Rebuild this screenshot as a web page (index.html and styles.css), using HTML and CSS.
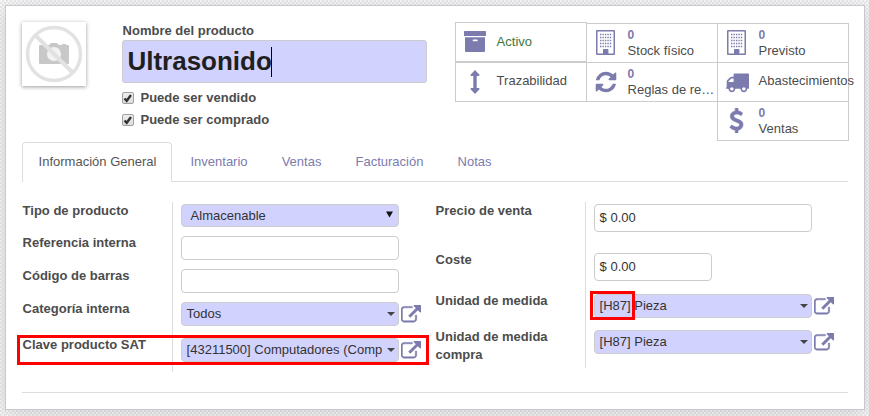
FILE: index.html
```html
<!DOCTYPE html>
<html lang="es">
<head>
<meta charset="utf-8">
<title>Ultrasonido</title>
<link rel="stylesheet" href="styles.css">
</head>
<body>
<svg width="0" height="0" class="defs">
  <symbol id="ext" viewBox="0 0 1792 1792"><path d="M1408 928v320q0 119-84.5 203.5t-203.5 84.5h-832q-119 0-203.5-84.5t-84.5-203.5v-832q0-119 84.5-203.5t203.5-84.5h704q14 0 23 9t9 23v64q0 14-9 23t-23 9h-704q-66 0-113 47t-47 113v832q0 66 47 113t113 47h832q66 0 113-47t47-113v-320q0-14 9-23t23-9h64q14 0 23 9t9 23zm384-864v512q0 26-19 45t-45 19-45-19l-176-176-652 652q-10 10-23 10t-23-10l-114-114q-10-10-10-23t10-23l652-652-176-176q-19-19-19-45t19-45 45-19h512q26 0 45 19t19 45z"/></symbol>
  <symbol id="building" viewBox="0 0 19 25"><path fill-rule="evenodd" d="M1 0h17a1 1 0 0 1 1 1v23a1 1 0 0 1-1 1H1a1 1 0 0 1-1-1V1a1 1 0 0 1 1-1zM1.500 1.500v22H7v-3.700q0-.7.700-.7h4q.700 0 .700.7v3.700h5.100v-22z"/><path d="M4 4.500h11.200M4 7.500h11.200M4 10.500h11.200M4 13.500h11.200M4 16.500h11.200" stroke="#7c7bad" stroke-width="1.300" stroke-dasharray="1.400 1.050"/></symbol>
</svg>
<main class="sheet">
  <header class="head">
    <div class="photo">
      <svg width="64" height="64" viewBox="0 0 64 64"><path fill="#c8c8c8" d="M18 23h9l2-2h6l2 2h3v-1h4v1h2q1 0 1 1v17q0 1-1 1H18q-1 0-1-1V24q0-1 1-1z"/><circle cx="32" cy="32" r="7" fill="#f2f2f2"/><path d="M14 14l36 36" stroke="#e2e2e2" stroke-width="4"/><circle cx="32" cy="32" r="26.500" fill="none" stroke="#e2e2e2" stroke-width="3.500"/></svg>
    </div>
    <div class="title">
      <label class="lbl">Nombre del producto</label>
      <div class="name"><span>Ultrasonido</span><i class="caret"></i></div>
      <label class="check"><i class="box"><svg width="12" height="12" viewBox="0 0 12 12"><path d="M2.500 6.500l2.200 2.300L9 3" fill="none" stroke="#333" stroke-width="2.400"/></svg></i>Puede ser vendido</label>
      <label class="check"><i class="box"><svg width="12" height="12" viewBox="0 0 12 12"><path d="M2.500 6.500l2.200 2.300L9 3" fill="none" stroke="#333" stroke-width="2.400"/></svg></i>Puede ser comprado</label>
    </div>
    <div class="stats">
      <div class="col first">
        <div class="stat"><span class="ico"><svg width="22" height="21" viewBox="0 0 22 21"><path fill-rule="evenodd" d="M.7 0h20.600q.7 0 .7.700V5H0V.700Q0 0 .7 0zM1 6.200h20V20q0 1-1 1H2q-1 0-1-1zM9.500 8.500q-.8 0-.8.900t.8.900h3.400q.8 0 .8-.9t-.8-.9z"/></svg></span><span class="one green">Activo</span></div>
        <div class="stat"><span class="ico"><svg width="10" height="24" viewBox="0 0 10 24"><path d="M5 0l4.500 4.700q.3 1.100-.7 1.300H6.700v12h2.100q1 .2.700 1.300L5 24 .5 19.300Q.2 18.200 1.200 18h2.100V6H1.200Q.2 5.800.5 4.700z"/></svg></span><span class="one">Trazabilidad</span></div>
      </div>
      <div class="col">
        <div class="stat"><span class="ico"><svg width="19" height="25"><use href="#building"/></svg></span><span class="two"><b>0</b>Stock físico</span></div>
        <div class="stat"><span class="ico"><svg width="24" height="24" viewBox="0 0 1792 1792"><path d="M1639 1056q0 5-1 7-64 268-268 434.500t-478 166.500q-146 0-282.500-55t-243.500-157l-129 129q-19 19-45 19t-45-19-19-45v-448q0-26 19-45t45-19h448q26 0 45 19t19 45-19 45l-137 137q71 66 161 102t187 36q134 0 250-65t186-179q11-17 53-117 8-23 30-23h192q13 0 22.500 9.500t9.500 22.500zm25-800v448q0 26-19 45t-45 19h-448q-26 0-45-19t-19-45 19-45l138-138q-148-137-349-137-134 0-250 65t-186 179q-11 17-53 117-8 23-30 23h-199q-13 0-22.500-9.500t-9.500-22.500v-7q65-268 270-434.500t480-166.500q146 0 284 55.500t245 156.500l130-129q19-19 45-19t45 19 19 45z"/></svg></span><span class="two"><b>0</b>Reglas de re…</span></div>
      </div>
      <div class="col">
        <div class="stat"><span class="ico"><svg width="19" height="25"><use href="#building"/></svg></span><span class="two"><b>0</b>Previsto</span></div>
        <div class="stat"><span class="ico"><svg width="24" height="24" viewBox="0 0 1792 1792"><path d="M640 1408q0-52-38-90t-90-38-90 38-38 90 38 90 90 38 90-38 38-90zm-384-512h384v-256h-158q-13 0-22 9l-195 195q-9 9-9 22v30zm1280 512q0-52-38-90t-90-38-90 38-38 90 38 90 90 38 90-38 38-90zm256-1088v1024q0 15-4 26.500t-13.500 18.500-16.500 11.500-23.500 6-22.500 2-25.500 0-22.500-.5q0 106-75 181t-181 75-181-75-75-181h-384q0 106-75 181t-181 75-181-75-75-181h-64q-3 0-22.500.5t-25.500 0-22.500-2-23.500-6-16.500-11.500-13.500-18.500-4-26.500q0-26 19-45t45-19v-320q0-8-.5-35t0-38 2.500-34.500 6.500-37 14-30.500 22.500-30l198-198q19-19 50.500-32t58.500-13h160v-192q0-26 19-45t45-19h1024q26 0 45 19t19 45z"/></svg></span><span class="one">Abastecimientos</span></div>
        <div class="stat"><span class="ico"><svg width="25" height="25" viewBox="0 0 1792 1792"><path d="M1362 1185q0 153-99.500 263.500t-258.500 136.500v175q0 14-9 23t-23 9h-135q-13 0-22.500-9.500t-9.500-22.500v-175q-66-9-127.500-31t-101.500-44.500-74-48-46.500-37.500-17.500-18q-17-21-2-41l103-135q7-10 23-12 15-2 24 9l2 2q113 99 243 125 37 8 74 8 81 0 142.500-43t61.500-122q0-28-15-53t-33.500-42-58.500-37.500-66-32-80-32.500q-39-16-61.500-25t-61.500-26.500-62.500-31-56.500-35.500-53.500-42.500-43.500-49-35.500-58-21-66.500-8.500-78q0-138 98-242t255-134v-180q0-13 9.500-22.500t22.500-9.500h135q14 0 23 9t9 23v176q57 6 110.500 23t87 33.500 63.500 37.500 39 29 15 14q17 18 5 38l-81 146q-8 15-23 16-14 3-27-7-3-3-14.500-12t-39-26.500-58.500-32-74.500-26-85.500-11.500q-95 0-155 43t-60 111q0 26 8.500 48t29.500 41.500 39.500 33 56 31 60.500 27 70 27.500q53 20 81 31.500t76 35 75.500 42.500 62 50 53 63.500 31.500 76.500 13 94z" stroke="#7c7bad" stroke-width="50"/></svg></span><span class="two"><b>0</b>Ventas</span></div>
      </div>
    </div>
  </header>
  <nav class="tabs"><a class="tab on">Información General</a><a class="tab">Inventario</a><a class="tab">Ventas</a><a class="tab">Facturación</a><a class="tab">Notas</a></nav>
  <section class="form">
    <div class="group left">
      <div class="row"><label class="lbl">Tipo de producto</label><div class="cell"><div class="field select">Almacenable<svg width="7" height="7" viewBox="0 0 7 7"><path d="M0 .5h7L3.500 6.500z" fill="#111"/></svg></div></div></div>
      <div class="row"><label class="lbl">Referencia interna</label><div class="cell"><div class="field"></div></div></div>
      <div class="row"><label class="lbl">Código de barras</label><div class="cell"><div class="field"></div></div></div>
      <div class="row m2o"><label class="lbl">Categoría interna</label><div class="cell"><div class="field req"><span>Todos</span><i class="arrow"></i></div><svg class="ext"><use href="#ext"/></svg></div></div>
      <div class="row m2o"><label class="lbl">Clave producto SAT</label><div class="cell"><div class="field req"><span>[43211500] Computadores (Comp</span><i class="arrow"></i></div><svg class="ext"><use href="#ext"/></svg></div><i class="mark mark-row"></i></div>
    </div>
    <div class="group right">
      <div class="row price"><label class="lbl">Precio de venta</label><div class="cell"><div class="field money">$ 0.00</div></div></div>
      <div class="row cost"><label class="lbl">Coste</label><div class="cell"><div class="field money short">$ 0.00</div></div></div>
      <div class="row m2o"><label class="lbl">Unidad de medida</label><div class="cell"><div class="field req"><span>[H87] Pieza</span><i class="arrow"></i><i class="mark mark-code"></i></div><svg class="ext"><use href="#ext"/></svg></div></div>
      <div class="row m2o last"><label class="lbl">Unidad de medida compra</label><div class="cell"><div class="field req"><span>[H87] Pieza</span><i class="arrow"></i></div><svg class="ext"><use href="#ext"/></svg></div></div>
    </div>
  </section>
</main>
</body>
</html>
```
FILE: styles.css
```css
* { box-sizing: border-box; }
body {
  margin: 0;
  height: 416px;
  overflow: hidden;
  padding: 5px 4px 0 5px;
  font: 13px/18px "Liberation Sans", Arial, sans-serif;
  color: #4c4c4c;
  background: repeating-conic-gradient(#e9e9e9 0 25%, #f8f8f8 0 50%) 0 0 / 4px 4px;
}
svg { display: block; fill: #7c7bad; }
.defs { position: absolute; }
.sheet {
  height: 405px;
  padding: 16px;
  background: #fff;
  border: 1px solid #c8c8d3;
  box-shadow: 0 4px 20px rgba(0, 0, 0, .15);
}
.head { display: flex; height: 120px; }
.photo { width: 64px; height: 64px; box-shadow: 0 1px 4px rgba(0, 0, 0, .4); }
.title { margin-left: 36px; width: 305px; }
.lbl { font-weight: bold; padding-left: .6px; }
.title .lbl { display: block; height: 18px; line-height: 17px; }
.name {
  display: flex;
  align-items: center;
  height: 43px;
  padding: 0 4.400px;
  border: 1px solid #ccc;
  border-radius: 3px;
  background: #d2d2ff;
  font: bold 26px/41px "Liberation Sans", Arial, sans-serif;
  color: #1f1f1f;
}
.caret { width: 1px; height: 30px; margin-left: -.4px; background: #000; }
.check { display: flex; align-items: center; height: 22px; font-weight: bold; }
.name + .check { margin-top: 4px; }
.box {
  width: 12px;
  height: 12px;
  margin-right: 6.500px;
  border: 1px solid #a0a0a0;
  border-radius: 2px;
  background: linear-gradient(#eee, #ddd);
}
.box svg { margin: -1px; }
.stats { display: flex; margin-left: 28px; padding-top: 1px; }
.col { width: 131px; }
.stat {
  display: flex;
  align-items: center;
  width: 132px;
  height: 40px;
  margin-bottom: -1px;
  border: 1px solid #ccc;
  line-height: 15px;
  white-space: nowrap;
}
.first { margin-top: -1px; }
.first .stat { margin-bottom: 0; }
.ico { display: flex; justify-content: center; flex: 0 0 37px; margin: -1px 4px 0 0; }
.one { margin: -3px 0 0 -.4px; }
.first .one { margin-top: -2px; }
.first .stat + .stat .one { margin-top: -4px; }
.green { color: #3c763d; }
.two { margin-left: -.4px; }
.two b { display: block; font-size: 12px; color: #7c7bad; }
.tabs { display: flex; height: 40px; border-bottom: 1px solid #ddd; }
.tab { height: 39px; padding: 10px 14.500px 0 15.600px; margin-right: 2px; color: #7c7bad; border: 1px solid transparent; border-bottom: 0; line-height: 17px; }
.tab.on { height: 40px; color: #555; background: #fff; border-color: #ddd; border-radius: 4px 4px 0 0; }
.form { display: flex; height: 211px; padding-top: 20px; border-bottom: 1px solid #ddd; }
.group { width: 413px; }
.row { display: flex; position: relative; height: 33px; }
.left .row:first-child { height: 32px; }
.row .lbl { width: 150px; padding-right: 20px; }
.cell { flex: 1; display: flex; border-left: 1px solid #ddd; padding: 2px 0 0 8px; }
.m2o.row { height: 36px; }
.last.row { height: 40px; }
.field {
  position: relative;
  display: flex;
  align-items: center;
  justify-content: space-between;
  width: 218px;
  height: 24px;
  padding: 0 3px 0 4.600px;
  border: 1px solid #ccc;
  border-radius: 4px;
  background: #fff;
  color: #333;
  white-space: nowrap;
}
.select { height: 23px; padding: 1px 5px 0 8.600px; background: #d2d2ff; }
.select svg { margin-top: -3px; }
.req { background: #d2d2ff; }
.arrow { border: 4px solid transparent; border-top-color: #444; border-bottom: 0; }
.ext { width: 20px; height: 20px; margin: 3px 0 0 2px; stroke: #7c7bad; stroke-width: 45px; overflow: visible; }
.price.row { height: 49px; }
.cost.row { height: 41px; }
.money { height: 28px; }
.short { width: 118px; }
.mark { position: absolute; border: 3px solid #f00; }
.mark-row { left: -5px; top: -1px; width: 412px; height: 30px; }
.mark-code { left: -5px; top: -4px; width: 45px; height: 29px; }
```
